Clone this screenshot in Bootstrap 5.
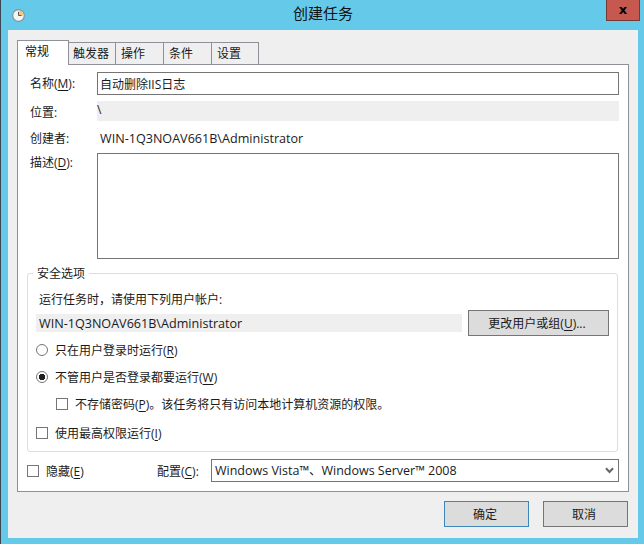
<!DOCTYPE html>
<html lang="zh-CN">
<head>
<meta charset="utf-8">
<title>创建任务</title>
<link href="https://cdn.jsdelivr.net/npm/bootstrap@5.3.0/dist/css/bootstrap.min.css" rel="stylesheet">
<style>
html,body{margin:0;height:544px;overflow:hidden;background:#65c9ea}
body{font:12px/18px "Open Sans","Noto Sans CJK SC",sans-serif;color:#1a1a1a}
.win{height:544px;width:644px;border-left:1px solid #3c4650;display:flex;flex-direction:column}
.tbar{height:29px;display:grid;grid-template-columns:1fr auto 1fr;flex:none}
.tbar-ico{padding:9px 0 0 11px;line-height:0}
.tbar-title{font-size:15px;line-height:26px;color:#111;padding-left:1px}
.tbar-close{justify-self:end;margin-right:4px;width:34px;height:21px;background:#c75850;border:1px solid #733a36;border-top:0;color:#000;font:bold 13px/16px "DejaVu Sans",sans-serif;text-align:center;padding:0}
.panel{flex:none;width:630px;height:509px;margin-left:7px;background:#efefef;border-top:1px solid #9fb4c0;padding:10px 9px 0 9px}
.panel .nav-tabs{border:0;height:24px;position:relative;z-index:1;align-items:flex-end;margin:0;flex-wrap:nowrap}
.panel .nav-link{border:1px solid #8e9198;border-bottom:0;border-radius:0;background:#efefef;color:#1a1a1a;height:22px;padding:2px 0 0 5px;text-align:left;margin:0 -1px 0 0;font-size:12px;line-height:18px}
.panel .nav-link.active{background:#fff;height:25px;width:52px;color:#111;padding:2px 0 0 7px;margin:0 -1px -1px 0;position:relative;z-index:2;border-color:#8e9198}
.panel .nav-link.tw1{width:48px;padding-left:4px}
.panel .nav-link.tw2{width:49px}
.panel .nav-link.tw3{width:48px}
.pane{width:612px;height:428px;background:#fff;border:1px solid #8e9198;padding:7px 9px 0 9px}
.frow{display:flex;align-items:center}
.flab{width:70px;padding-left:3px;flex:none}
.pane .form-control,.pane .form-select{border:1px solid #757575;border-radius:0;box-shadow:none;color:#1a1a1a;font-size:12px;line-height:18px}
.lat{font-size:12.6px}
.pane .finp{height:23px;width:522px;padding:0 2px}
.ro{height:20px;width:522px;background:#efefef;line-height:18px}
.rowa{margin-top:6px;height:20px}
.flab-lo{padding-top:3px;align-self:flex-start}
.rowb{margin-top:8px;height:20px}
.lat-in{padding-left:3px}
.rowc{margin-top:4px;align-items:flex-start}
.flab2{padding-top:1px}
.farea{width:522px;height:106px;resize:none;padding:3px}
.secbox{margin-top:14px;width:591px;height:179px;border:1px solid #d5dfe5;border-radius:3px;padding:0 8px;position:relative}
.sectitle{position:absolute;left:5px;top:-9px;background:#fff;padding:0 4px;line-height:18px}
.sec-p{padding:17px 0 0 3px;margin:0;height:34px}
.acct{margin-top:2px;height:26px}
.acct-v{width:426px;height:18px;background:#efefef;padding-left:3px;line-height:19px}
.btnx{border:1px solid #757575;border-radius:0;background:#dcdcdc;color:#1a1a1a;font-size:12px;line-height:18px;padding:2px 3px 0 0;--bs-btn-hover-bg:#dcdcdc}
.bchg{width:141px;height:26px;margin-left:6px}
.opt{display:flex;align-items:flex-start;height:18px;margin:0;line-height:20px}
.opt .form-check-input{width:12px;height:12px;margin:3px 7px 0 0;flex:none;border:1px solid #757575;border-radius:0;background-color:#fff;box-shadow:none;float:none;background-image:none}
.opt .form-check-input[type=radio]{border-radius:50%}
.opt .form-check-input[type=radio]:checked{background:radial-gradient(circle,#222 0 3px,#fff 3.4px);border-color:#757575}
.o1{margin-top:5px}.o2{margin-top:9px}.o3{margin-top:9px;margin-left:20px}.o4{margin-top:11px}
.btmrow{margin-top:7px;height:23px}
.hid{width:130px;flex:none}
.cfglab{width:54px;flex:none;padding-top:2px}
.pane .cfg{width:408px;height:23px;padding:0 3px;font-size:12.5px;background-image:url("data:image/svg+xml,%3csvg xmlns='http://www.w3.org/2000/svg' viewBox='0 0 9 7'%3e%3cpath d='M1 1.2l3.5 3.8L8 1.2' fill='none' stroke='%23666' stroke-width='2'/%3e%3c/svg%3e");background-position:right 4px center;background-size:9px 7px}
.foot{display:flex;justify-content:flex-end;gap:14px;margin-top:9px;width:611px}
.bfoot{width:85px;height:26px}
.bok{border-color:#3f86b8}
u{text-underline-offset:2px}
</style>
</head>
<body>
<div class="win">
  <div class="tbar">
    <div class="tbar-ico">
      <svg width="13" height="13" viewBox="0 0 13 13"><circle cx="6.5" cy="6.5" r="5.8" fill="#f4f4f2" stroke="#8b9296" stroke-width="1.2"/><path d="M6.5 1.5A5 5 0 0 1 11.5 6.5H6.5Z" fill="#f0c878"/><path d="M6.5 3v3.5H9.5" fill="none" stroke="#55595c" stroke-width="1"/></svg>
    </div>
    <div class="tbar-title">创建任务</div>
    <button type="button" class="tbar-close">x</button>
  </div>
  <div class="panel">
    <ul class="nav nav-tabs">
      <li class="nav-item"><a class="nav-link active" href="#">常规</a></li>
      <li class="nav-item"><a class="nav-link tw1" href="#">触发器</a></li>
      <li class="nav-item"><a class="nav-link tw2" href="#">操作</a></li>
      <li class="nav-item"><a class="nav-link tw2" href="#">条件</a></li>
      <li class="nav-item"><a class="nav-link tw3" href="#">设置</a></li>
    </ul>
    <div class="pane">
      <div class="frow"><label class="flab">名称(<u>M</u>):</label><input class="form-control finp" value="自动删除IIS日志"></div>
      <div class="frow rowa"><span class="flab flab-lo">位置:</span><div class="ro">\</div></div>
      <div class="frow rowb"><span class="flab">创建者:</span><span class="lat lat-in">WIN-1Q3NOAV661B\Administrator</span></div>
      <div class="frow rowc"><label class="flab flab2">描述(<u>D</u>):</label><textarea class="form-control farea"></textarea></div>
      <div class="secbox">
        <span class="sectitle">安全选项</span>
        <p class="sec-p">运行任务时，请使用下列用户帐户:</p>
        <div class="frow acct"><div class="acct-v lat">WIN-1Q3NOAV661B\Administrator</div><button type="button" class="btn btnx bchg">更改用户或组(<u>U</u>)...</button></div>
        <label class="opt o1"><input class="form-check-input" type="radio" name="r">只在用户登录时运行(<u>R</u>)</label>
        <label class="opt o2"><input class="form-check-input" type="radio" name="r" checked>不管用户是否登录都要运行(<u>W</u>)</label>
        <label class="opt o3"><input class="form-check-input" type="checkbox">不存储密码(<u>P</u>)。该任务将只有访问本地计算机资源的权限。</label>
        <label class="opt o4"><input class="form-check-input" type="checkbox">使用最高权限运行(<u>I</u>)</label>
      </div>
      <div class="frow btmrow">
        <label class="opt hid"><input class="form-check-input" type="checkbox">隐藏(<u>E</u>)</label>
        <label class="cfglab">配置(<u>C</u>):</label>
        <select class="form-select cfg"><option>Windows Vista™、Windows Server™ 2008</option></select>
      </div>
    </div>
    <div class="foot">
      <button type="button" class="btn btnx bfoot bok">确定</button>
      <button type="button" class="btn btnx bfoot">取消</button>
    </div>
  </div>
</div>
</body>
</html>
